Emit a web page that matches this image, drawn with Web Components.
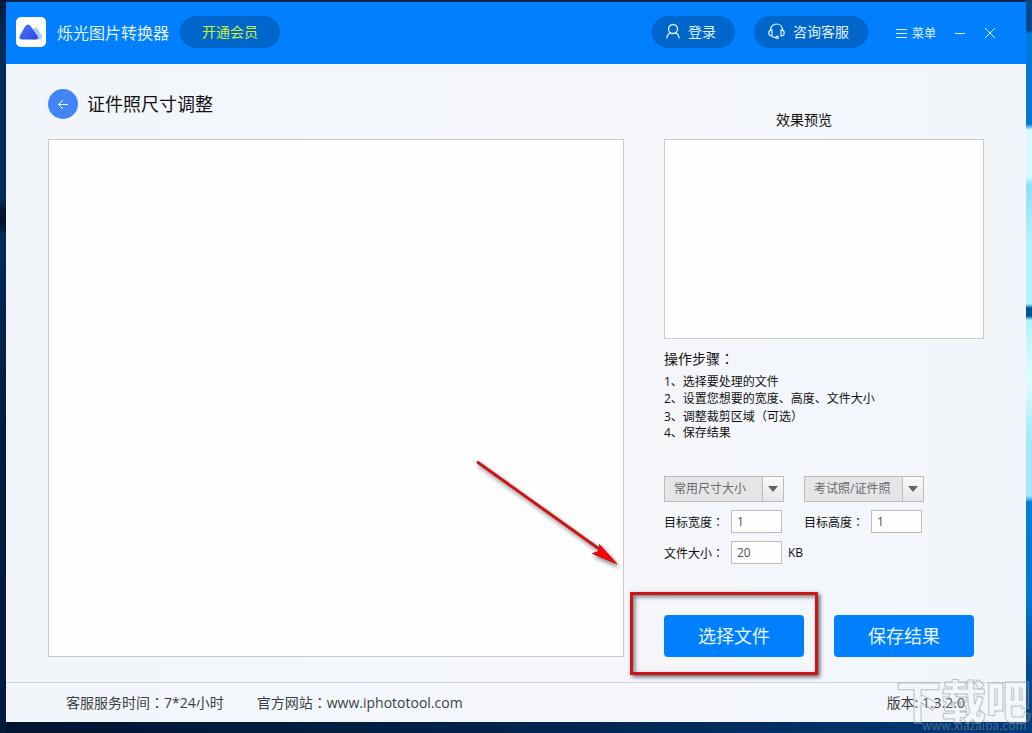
<!DOCTYPE html>
<html lang="zh-CN">
<head>
<meta charset="UTF-8">
<meta name="viewport" content="width=device-width, initial-scale=1">
<title>烁光图片转换器</title>
<style>
  body {
    margin: 0;
    font-family: "Open Sans", "Noto Sans CJK SC", sans-serif;
    font-size: 14px;
    color: #111;
  }
</style>
</head>
<body>
<desktop-stage>
  <app-window>
    <title-bar slot="header"></title-bar>
    <crop-canvas></crop-canvas>
    <side-panel slot="side"></side-panel>
    <status-bar slot="footer"></status-bar>
  </app-window>
  <site-watermark slot="overlay"></site-watermark>
</desktop-stage>

<script>
// Base común: cada componente define su plantilla y la clona en su shadow root.
class BaseElement extends HTMLElement {
  constructor() {
    super();
    const template = document.createElement('template');
    template.innerHTML = this.constructor.markup;
    this.attachShadow({ mode: 'open' });
    this.shadowRoot.appendChild(template.content.cloneNode(true));
  }
}

// Desktop behind the window
class DesktopStage extends BaseElement {
  static markup = `
    <style>
      :host {
        box-sizing: border-box;
        display: flex;
        position: relative;
        min-height: 100vh;
        padding: 2px 6px 11px;
        overflow: hidden;
        background:
          linear-gradient(#004a8c 0 30px, #0078d4 34px 124px, #d8fbff 130px 176px, #8fdcf8 186px, #b4f3ff 240px 304px, #00529c 308px 316px, #b4f3ff 320px, #e0fdff 380px, #a4e8fc 440px 496px, #007fd8 502px, #0078d8 600px, #00509c 660px, #003a78) right top / 6px 100% no-repeat,
          linear-gradient(#001a3c, #002c5a 40px 200px, #001634 210px 225px, #002b58 235px, #001c42 420px, #001a3c) left top / 6px 100% no-repeat,
          linear-gradient(90deg, #001430, #00244c 50%, #003a78) left bottom / 100% 11px no-repeat,
          #00264c;
      }

      ::slotted(app-window) {
        flex: 1;
      }
    </style>
    <slot></slot>
    <slot name="overlay"></slot>
  `;
}

class AppWindow extends BaseElement {
  static markup = `
    <style>
      :host {
        display: flex;
        flex-direction: column;
        min-width: 0;
        background: linear-gradient(90deg, #f2f6fa, #f4f6fa 60%, #f2f6fa);
      }

      main {
        flex: 1;
        display: grid;
        grid-template-columns: minmax(0, 1fr) 320px;
        gap: 40px;
        padding: 0 42px 25px;
      }
    </style>
    <slot name="header"></slot>
    <main>
      <slot></slot>
      <slot name="side"></slot>
    </main>
    <slot name="footer"></slot>
  `;
}

class PillButton extends BaseElement {
  static markup = `
    <style>
      :host {
        display: inline-flex;
      }

      button {
        display: inline-flex;
        align-items: center;
        gap: 8px;
        height: 32px;
        padding: var(--pill-padding, 0 16px);
        border: 0;
        border-radius: 16px;
        background: #0066cc;
        color: inherit;
        font: inherit;
        font-size: 14px;
        cursor: pointer;
      }

      button:hover {
        background: #005bb8;
      }
    </style>
    <button type="button"><slot name="icon"></slot><slot></slot></button>
  `;
}

class TitleBar extends BaseElement {
  static markup = `
    <style>
      :host {
        display: block;
        background: #007fff;
        color: #e2f4ff;
      }

      header {
        box-sizing: border-box;
        display: flex;
        align-items: center;
        height: 62px;
        padding: 0 30px 2px 10px;
      }

      .logo {
        margin-right: 11px;
      }

      h1 {
        margin: 0 11px 0 0;
        font-size: 16px;
        font-weight: 400;
      }

      .vip {
        --pill-padding: 0 22px 2px;
        color: #c8f03c;
      }

      .spacer {
        flex: 1;
      }

      .login, .service {
        --pill-padding: 0 19px 2px 14px;
      }

      .login {
        margin-right: 19px;
      }

      .window-button {
        display: inline-flex;
        align-items: center;
        gap: 5px;
        margin-left: 18px;
        padding: 2px 0 0;
        border: 0;
        background: none;
        color: inherit;
        font: inherit;
        font-size: 12px;
        cursor: pointer;
      }

      .menu {
        margin-left: 28px;
      }

      svg {
        display: block;
        fill: none;
        stroke: currentColor;
      }
    </style>
    <header>
      <svg class="logo" width="30" height="30" viewBox="0 0 30 30">
        <defs>
          <linearGradient id="peak" x1="0" y1="0" x2="1" y2="1">
            <stop offset="0" stop-color="#4b78ff"/>
            <stop offset="1" stop-color="#2a48e0"/>
          </linearGradient>
        </defs>
        <rect width="30" height="30" rx="5" fill="#fff" stroke="none"/>
        <path d="M16.500 13.500Q19 8 22 12.500L25.500 18Q27.500 22.500 23 22.500H15Z" fill="#a9cdf5" stroke="none"/>
        <path d="M9 9.500Q12 5.500 15 9.500L21.500 19Q23 22.500 19.500 22.500H6Q2.200 22.500 4 18.500Z" fill="url(#peak)" stroke="none"/>
      </svg>
      <h1>烁光图片转换器</h1>
      <pill-button class="vip">开通会员</pill-button>
      <div class="spacer"></div>
      <pill-button class="login">
        <svg slot="icon" width="14" height="16" viewBox="0 0 14 16" stroke-width="1.300">
          <circle cx="7" cy="6" r="4.500"/>
          <path d="M1 15.500C1.200 12.300 2.500 10.500 4.700 9.700M13 15.500C12.800 12.300 11.500 10.500 9.300 9.700"/>
        </svg>登录</pill-button>
      <pill-button class="service">
        <svg slot="icon" width="17" height="16" viewBox="0 0 17 16" stroke-width="1.200">
          <path d="M2.500 7.500C2.500 3.500 5 1 8.500 1S14.500 3.500 14.500 7.500"/>
          <path d="M4 7.200H3Q.8 7.500 .8 10T3 12.800H4ZM13 7.200H14Q16.200 7.500 16.200 10T14 12.800H13ZM3.500 12.800Q5 14.500 8 14.600"/>
          <circle cx="9.200" cy="14.300" r="1.200"/>
        </svg>咨询客服</pill-button>
      <button class="window-button menu" type="button">
        <svg width="11" height="11" viewBox="0 0 11 11"><path d="M0 1.500H11M0 5.500H11M0 9.500H11"/></svg>菜单
      </button>
      <button class="window-button" type="button" aria-label="最小化">
        <svg width="12" height="12" viewBox="0 0 12 12"><path d="M1 6.500H11"/></svg>
      </button>
      <button class="window-button" type="button" aria-label="关闭">
        <svg width="12" height="12" viewBox="0 0 12 12"><path d="M1 1L11 11M11 1L1 11"/></svg>
      </button>
    </header>
  `;
}

class CropCanvas extends BaseElement {
  static markup = `
    <style>
      :host {
        display: flex;
        flex-direction: column;
        min-width: 0;
      }

      .heading {
        display: flex;
        align-items: center;
        gap: 9px;
        height: 30px;
        padding: 25px 0 20px;
      }

      .back {
        display: grid;
        place-items: center;
        width: 30px;
        height: 30px;
        padding: 0;
        border: 0;
        border-radius: 50%;
        background: #4285f8;
        color: #fff;
        cursor: pointer;
      }

      h2 {
        margin: 0;
        padding-bottom: 2px;
        font-size: 18px;
        font-weight: 400;
      }

      .canvas {
        flex: 1;
        position: relative;
        border: 1px solid #c8cbce;
        background: #fefefe;
      }

      .arrow {
        position: absolute;
        right: 0;
        bottom: 76px;
        filter: drop-shadow(2px 3px 2px rgba(0, 0, 0, 0.5));
      }
    </style>
    <div class="heading">
      <button class="back" type="button" aria-label="返回">
        <svg width="12" height="12" viewBox="0 0 12 12" fill="none" stroke="currentColor"><path d="M11 6.500H1.500M6 2L1.500 6.500L6 11"/></svg>
      </button>
      <h2>证件照尺寸调整</h2>
    </div>
    <div class="canvas">
      <svg class="arrow" width="163" height="130" viewBox="0 0 163 130">
        <path d="M18 12.500L142 101" stroke="#cb1519" stroke-width="3" stroke-linecap="round"/>
        <path d="M157 114L132.500 103.500L138.500 101.500L139.500 94.500Z" fill="#fb0207" stroke="#c81014"/>
      </svg>
    </div>
  `;
}

// Drop-down with a separate arrow cell
class SizeSelect extends BaseElement {
  static markup = `
    <style>
      :host {
        display: block;
      }

      .box {
        position: relative;
      }

      select {
        appearance: none;
        box-sizing: border-box;
        display: block;
        width: 100%;
        height: 26px;
        margin: 0;
        padding: 0 24px 2px 9px;
        border: 1px solid #bcbcbe;
        border-radius: 0;
        background:
          linear-gradient(#bcbcbe, #bcbcbe) right 20px top / 1px 100% no-repeat,
          linear-gradient(#fafafa, #e6e6e8) right top / 20px 100% no-repeat,
          #e5e5e8;
        color: #66696c;
        font: inherit;
        font-size: 12px;
      }

      svg {
        position: absolute;
        right: 6px;
        top: 10px;
        pointer-events: none;
      }
    </style>
    <div class="box">
      <select><option></option></select>
      <svg width="10" height="6" viewBox="0 0 10 6"><path d="M0 0H10L5 6Z" fill="#626466"/></svg>
    </div>
  `;

  connectedCallback() {
    const select = this.shadowRoot.querySelector('select');
    select.setAttribute('aria-label', this.getAttribute('label'));
    select.options[0].textContent = this.getAttribute('value');
  }
}

class SizeField extends BaseElement {
  static markup = `
    <style>
      :host {
        display: flex;
        align-items: center;
        height: 23px;
        font-size: 12px;
        white-space: nowrap;
      }

      label {
        flex: 0 0 67px;
      }

      .colon {
        font-family: "Noto Sans CJK TC", sans-serif;
      }

      input {
        box-sizing: border-box;
        flex: 0 0 51px;
        width: 51px;
        height: 23px;
        padding: 0 5px;
        border: 1px solid #bcbcbe;
        background: #fefefe;
        color: #4c4e50;
        font: inherit;
      }

      ::slotted(*) {
        margin-left: 6px;
      }
    </style>
    <label for="field"><span class="name"></span><span class="colon" lang="zh-TW">：</span></label>
    <input id="field" type="text">
    <slot></slot>
  `;

  connectedCallback() {
    this.shadowRoot.querySelector('.name').textContent = this.getAttribute('label');
    this.shadowRoot.querySelector('input').value = this.getAttribute('value');
  }
}

class ActionButton extends BaseElement {
  static markup = `
    <style>
      :host {
        display: block;
        position: relative;
      }

      button {
        width: 100%;
        height: 42px;
        padding: 0 0 2px;
        border: 0;
        border-radius: 4px;
        background: #007fff;
        color: #e8f7ff;
        font: inherit;
        font-size: 18px;
        cursor: pointer;
      }

      button:hover {
        background: #0072e6;
      }

      /* Red frame that marks the next step */
      :host([marked])::after {
        content: "";
        position: absolute;
        inset: -23px -14px -18px -34px;
        border: 3px solid #cb1519;
        box-shadow: 2px 2px 4px rgba(0, 0, 0, 0.6), inset 2px 2px 4px rgba(0, 0, 0, 0.5);
        pointer-events: none;
      }
    </style>
    <button type="button"><slot></slot></button>
  `;
}

class SidePanel extends BaseElement {
  static markup = `
    <style>
      :host {
        display: flex;
        flex-direction: column;
      }

      .caption {
        margin: 0;
        padding: 46px 40px 9px 0;
        font-weight: 400;
        font-size: 14px;
        line-height: 20px;
        text-align: center;
      }

      .preview {
        height: 198px;
        border: 1px solid #c8cbce;
        background: #fefefe;
      }

      h3 {
        margin: 9px 0 4px;
        font-size: 14px;
        line-height: 20px;
        font-weight: 400;
      }

      ol {
        margin: 0;
        padding: 0;
        list-style: none;
        font-size: 12px;
      }

      li {
        height: 17px;
        line-height: 17px;
      }

      .mid {
        font-family: "Noto Sans CJK TC", sans-serif;
      }

      form {
        display: grid;
        grid-template-columns: 120px 120px;
        gap: 8px 20px;
        margin-top: 35px;
      }

      .actions {
        display: grid;
        grid-template-columns: 140px 140px;
        gap: 30px;
        margin-top: auto;
      }
    </style>
    <h2 class="caption">效果预览</h2>
    <div class="preview"></div>
    <h3>操作步骤<span class="mid" lang="zh-TW">：</span></h3>
    <ol>
      <li>1、选择要处理的文件</li>
      <li>2、设置您想要的宽度、高度、文件大小</li>
      <li>3、调整裁剪区域<span class="mid" lang="zh-TW">（</span>可选<span class="mid" lang="zh-TW">）</span></li>
      <li>4、保存结果</li>
    </ol>
    <form>
      <size-select label="常用尺寸" value="常用尺寸大小"></size-select>
      <size-select label="照片类型" value="考试照/证件照"></size-select>
      <size-field label="目标宽度" value="1"></size-field>
      <size-field label="目标高度" value="1"></size-field>
      <size-field label="文件大小" value="20"><span>KB</span></size-field>
    </form>
    <div class="actions">
      <action-button marked>选择文件</action-button>
      <action-button>保存结果</action-button>
    </div>
  `;
}

class StatusBar extends BaseElement {
  static markup = `
    <style>
      :host {
        display: block;
        border-top: 1px solid #d2d5d8;
        color: #3c3f42;
      }

      footer {
        box-sizing: border-box;
        display: flex;
        align-items: center;
        gap: 33px;
        height: 39px;
        padding: 0 61px 2px 60px;
      }

      a {
        color: inherit;
        text-decoration: none;
      }

      .colon {
        font-family: "Noto Sans CJK TC", sans-serif;
      }

      .version {
        margin-left: auto;
      }
    </style>
    <footer>
      <span>客服服务时间<span class="colon" lang="zh-TW">：</span>7*24小时</span>
      <span>官方网站<span class="colon" lang="zh-TW">：</span><a href="#">www.iphototool.com</a></span>
      <span class="version">版本: 1.3.2.0</span>
    </footer>
  `;
}

class SiteWatermark extends BaseElement {
  static markup = `
    <style>
      :host {
        position: absolute;
        right: 0;
        bottom: 0;
        pointer-events: none;
      }

      svg {
        display: block;
      }

      text {
        font-family: "Noto Sans CJK SC", sans-serif;
      }
    </style>
    <svg width="138" height="70" viewBox="0 0 138 70">
      <text x="2" y="56" font-size="45" font-weight="900" fill="#ffffff" fill-opacity="0.15" stroke="#96999e" stroke-opacity="0.6">下载吧</text>
      <text x="28" y="67" font-size="12" fill="#8d9cb0" fill-opacity="0.5">www.xiazaiba.com</text>
    </svg>
  `;
}

customElements.define('pill-button', PillButton);
customElements.define('size-select', SizeSelect);
customElements.define('size-field', SizeField);
customElements.define('action-button', ActionButton);
customElements.define('title-bar', TitleBar);
customElements.define('crop-canvas', CropCanvas);
customElements.define('side-panel', SidePanel);
customElements.define('status-bar', StatusBar);
customElements.define('site-watermark', SiteWatermark);
customElements.define('app-window', AppWindow);
customElements.define('desktop-stage', DesktopStage);
</script>
</body>
</html>
